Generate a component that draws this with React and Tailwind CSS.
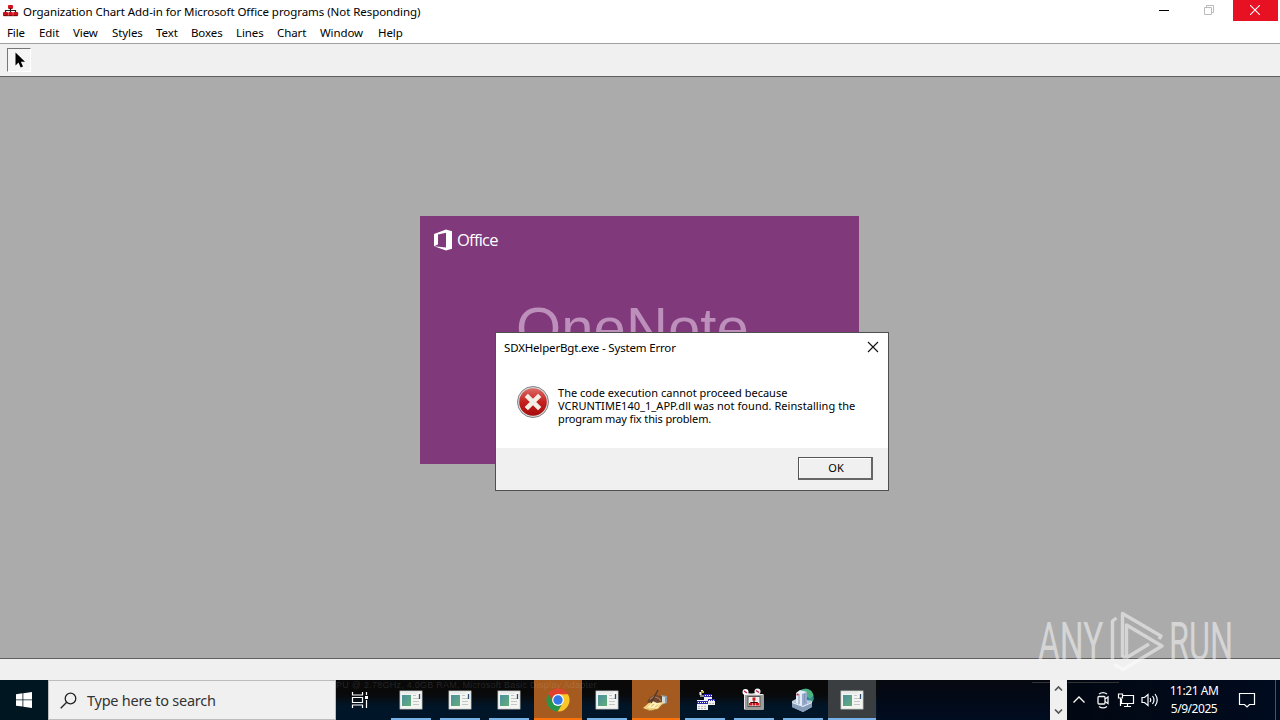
import clsx from "clsx";

const menus = [
  { label: "File", cls: "w-8" },
  { label: "Edit", cls: "w-[34px]" },
  { label: "View", cls: "w-[39px]" },
  { label: "Styles", cls: "w-11" },
  { label: "Text", cls: "w-[35px]" },
  { label: "Boxes", cls: "w-[45px]" },
  { label: "Lines", cls: "w-[41px]" },
  { label: "Chart", cls: "w-[43px]" },
  { label: "Window", cls: "w-[58px]" },
  { label: "Help", cls: "w-10" },
];

const tasks = [
  { id: 1, icon: "window" },
  { id: 2, icon: "window" },
  { id: 3, icon: "window" },
  { id: 4, icon: "chrome", state: "alert" },
  { id: 5, icon: "window" },
  { id: 6, icon: "note", state: "alert" },
  { id: 7, icon: "batch" },
  { id: 8, icon: "orgchart" },
  { id: 9, icon: "server" },
  { id: 10, icon: "window", state: "active" },
];

function OrgIcon() {
  return (
    <svg width="16" height="14" viewBox="0 0 16 14">
      <path d="M7.500 4v4M2.500 9V6.500h10V9" stroke="#222" strokeWidth="1.200" fill="none" />
      <rect x="5" y="1" width="5" height="3.600" rx="1" fill="#d8101c" />
      <rect x="0" y="8" width="5" height="4" rx="1" fill="#c8101c" />
      <rect x="5.300" y="8" width="4.600" height="4" rx="1" fill="#d8101c" />
      <rect x="10.200" y="8" width="5" height="4" rx="1" fill="#c8101c" />
      <path d="M5.500 4.500h4M.5 11.700h14" stroke="#600" strokeWidth=".8" />
    </svg>
  );
}

function WindowIcon() {
  return (
    <svg width="24" height="24" viewBox="0 0 24 24">
      <rect x="1" y="3" width="22" height="18" fill="#f4f4f1" stroke="#c9cfce" strokeWidth=".8" />
      <defs>
        <linearGradient id="winpane" x1="0" y1="0" x2="1" y2="1">
          <stop offset="0" stopColor="#4b8fa0" />
          <stop offset="1" stopColor="#62ad78" />
        </linearGradient>
      </defs>
      <rect x="3" y="7" width="9" height="11" fill="url(#winpane)" />
      <path d="M14 7.500h3M14 10.500h6M14 13.500h6M14 16.500h6" stroke="#c3c6c8" />
      <path d="M20.500 6v5" stroke="#27507a" strokeWidth="1.300" />
      <path d="M3 5h15" stroke="#dfe4e6" />
    </svg>
  );
}

function ChromeIcon() {
  return (
    <svg width="24" height="24" viewBox="0 0 24 24">
      <path d="M12 12L2 6.300A11.500 11.500 0 0 1 22 6.300z" fill="#e2402f" />
      <path d="M12 6.300h10A11.500 11.500 0 0 1 11.500 23.500L17 14.800z" fill="#fbc727" />
      <path d="M2 6.300L7 14.800l5 2.900 4.600-2.400-5.100 8.200A11.500 11.500 0 0 1 2 6.300z" fill="#27964b" />
      <circle cx="12" cy="12" r="5.900" fill="#fff" />
      <circle cx="12" cy="12" r="4.700" fill="#3478e5" />
    </svg>
  );
}

function NoteIcon() {
  return (
    <svg width="26" height="24" viewBox="0 0 26 24">
      <path d="M18 7l6 1v7l-6 2z" fill="#8f9ca3" />
      <path d="M18 8l4 1v6l-4 1z" fill="#d3dbdb" />
      <path d="M0 20L8 13l13 1-6 7-8 2z" fill="#f2cf7c" />
      <path d="M4 19.500L10 14l8 1-4 5.500z" fill="#fff0ba" />
      <path d="M8 18.500l3-2.500M12 19.500l3-3" stroke="#d8b050" />
      <path d="M4 14L7 9l5-2 7 1v6l-5 1-4-2-4 2z" fill="#6e452e" />
      <path d="M7 11l4-2.500 5 2 2 2.500" stroke="#b07a50" strokeWidth="1.200" fill="none" />
      <path d="M8 15L15 2" stroke="#4e3a2e" strokeWidth="1.500" />
      <path d="M2 21.500l6 1 8-1.500" stroke="#9c6a2c" fill="none" strokeWidth=".7" />
    </svg>
  );
}

function BatchIcon() {
  return (
    <svg width="24" height="24" viewBox="0 0 24 24" shapeRendering="crispEdges">
      <path d="M6 4h2V2h2v2H9v3h2v2H7V7H6z" fill="#8b8b8b" />
      <path d="M8 2h2v1H8zM7 4h1v3H7z" fill="#eee" />
      <path d="M9 3h2v2H9z" fill="#c9b83a" />
      <path d="M11 6h8v8h-8zM15 11h7v6h-7z" fill="#f1f1f1" />
      <path d="M11 6h8v3h-8zM15 11h7v2h-7z" fill="#2b27b0" />
      <path d="M4 12h11v10H4z" fill="#f1f1f1" />
      <path d="M4 13h11v3H4z" fill="#2b27b0" />
      <path d="M5 14.500h9M12 7.500h7M16 12.500h6" stroke="#fff" strokeDasharray="1 1" />
      <path d="M5 18.500h9M5 20.500h9M16 15.500h5" stroke="#bdbdbd" strokeDasharray="2 1" />
    </svg>
  );
}

function OrgChartIcon() {
  return (
    <svg width="24" height="24" viewBox="0 0 24 24">
      <rect x="2" y="6" width="20" height="16" rx="1" fill="#9c9c98" />
      <path d="M2.500 21V6.500H21" stroke="#e8e8e8" fill="none" />
      <rect x="6" y="8.500" width="12" height="10" fill="#f4f0f0" stroke="#555" />
      <path d="M4 4.500q4 3 10 1" stroke="#ddd" strokeWidth="1.500" fill="none" />
      <circle cx="3.500" cy="4" r="3" fill="#fff" />
      <circle cx="15.500" cy="3.500" r="3" fill="#f5f5f5" />
      <path d="M2 3l3 2M14 2.500l3 2" stroke="#b01c58" strokeWidth="1.500" />
      <path d="M12 12v4M8.500 16v-1.500h7V16" stroke="#400" fill="none" />
      <path d="M10.500 9.500h3v3h-3zM7 15h3v2.500H7zM10.500 15h3v2.500h-3zM14 15h3v2.500h-3z" fill="#d3151c" />
    </svg>
  );
}

function ServerIcon() {
  return (
    <svg width="24" height="24" viewBox="0 0 24 24">
      <circle cx="14" cy="9.500" r="8.800" fill="#2b83a3" />
      <path d="M11 1.500c6-2 10 1 11.500 6L19 11l-6-5z" fill="#4db380" />
      <path d="M18 12l5-2-3 6-3 1z" fill="#3fa070" />
      <path d="M1 13l6-3 14 3v6l-9 5L1 19z" fill="#b8c8da" />
      <path d="M1 14l11 4 9-4v5l-9 5-11-5z" fill="#869dba" />
      <path d="M1 14.500l11 4 9-4" stroke="#e8f0f8" fill="none" />
      <path d="M5 5l4-3 7 2v12l-5 2-6-3z" fill="#e4ecf5" />
      <path d="M11 6l5-2v12l-5 2z" fill="#96a9cb" />
      <path d="M8 6v10M13.500 6v9" stroke="#8297bd" />
      <path d="M5.500 6.500h2" stroke="#c23" strokeWidth="1.800" />
    </svg>
  );
}

const icons = {
  window: WindowIcon,
  chrome: ChromeIcon,
  note: NoteIcon,
  batch: BatchIcon,
  orgchart: OrgChartIcon,
  server: ServerIcon,
};

function TaskButton({ icon, state }) {
  const Icon = icons[icon];
  return (
    <div
      className={clsx(
        "relative w-12 mr-px h-10 shrink-0 flex items-center justify-center",
        state === "alert" && "bg-[#a55b20]",
        state === "active" && "bg-[#3b3e41]"
      )}
    >
      <Icon />
      <div
        className={clsx(
          "absolute bottom-0 h-0.5",
          state ? "inset-x-0" : "left-1 w-10",
          state === "alert" ? "bg-[#fc7208]" : "bg-[#76b2e8]"
        )}
      />
    </div>
  );
}

function Splash() {
  return (
    <div className="absolute left-[420px] top-[216px] w-[439px] h-[248px] bg-[#80397b] overflow-hidden">
      <div className="flex items-center pl-3.5 pt-[13px]">
        <svg width="18" height="22" viewBox="0 0 18 22">
          <path fillRule="evenodd" d="M0 5L12 .5l6 1.800v17.400l-6 1.800L0 17.300l12 1.200V3.700L4 5.500v10L0 17.300z" fill="#fff" />
        </svg>
        <span className="ml-[5px] font-['Open_Sans'] text-[16.5px] leading-[22px] tracking-[-0.75px] text-white">Office</span>
      </div>
      <div className="pl-24 mt-[43px] font-['Liberation_Sans'] text-[58px] leading-[67px] tracking-[0.1px] text-[#bd8fbb]">OneNote</div>
    </div>
  );
}

function ErrorDialog() {
  return (
    <div className="absolute left-[495px] top-[332px] w-[394px] h-[159px] flex flex-col bg-white border border-[#4f4f4f] text-black">
      <div className="flex justify-between h-[30px] shrink-0 pl-2 pr-[9px]">
        <span className="text-[11.5px] leading-[30px] tracking-[-0.17px] whitespace-nowrap">SDXHelperBgt.exe - System Error</span>
        <svg className="mt-2" width="12" height="12" viewBox="0 0 12 12">
          <path d="M1 1l10 10M11 1L1 11" stroke="#111" strokeWidth="1.100" />
        </svg>
      </div>
      <div className="flex flex-1 pl-[21px] pt-[23px]">
        <svg width="32" height="32" viewBox="0 0 32 32">
          <defs>
            <linearGradient id="err" x1="0" y1="0" x2="0" y2="1">
              <stop offset="0" stopColor="#dd6b65" />
              <stop offset=".5" stopColor="#c4201f" />
              <stop offset="1" stopColor="#a50d0d" />
            </linearGradient>
          </defs>
          <circle cx="16" cy="16" r="15.500" fill="#d9d9d9" stroke="#777" strokeWidth=".9" />
          <circle cx="16" cy="16" r="13.800" fill="url(#err)" />
          <path d="M9.300 9.300l13.400 13.400M22.700 9.300L9.300 22.700" stroke="#f4efe6" strokeWidth="4.600" />
        </svg>
        <div className="ml-[9px] text-[11px] leading-[13px] whitespace-nowrap">
          <p className="tracking-[0.01px]">The code execution cannot proceed because</p>
          <p className="tracking-[0.05px]">VCRUNTIME140_1_APP.dll was not found. Reinstalling the</p>
          <p className="tracking-[-0.13px]">program may fix this problem.</p>
        </div>
      </div>
      <div className="flex justify-end h-[42px] shrink-0 bg-[#f0f0f0] pt-[9px] pr-[15px]">
        <button className="w-[75px] h-[23px] border border-[#555] border-r-2 border-b-2 border-r-[#666] border-b-[#666] shadow-[inset_1px_1px_0_#fff] pl-0.5 text-[11px] leading-5 text-center">OK</button>
      </div>
    </div>
  );
}

function Watermark() {
  return (
    <div className="absolute left-[1038px] top-[608px] w-[200px] h-[66px] opacity-50 text-white">
      <div className="absolute left-0 top-1 origin-left scale-x-[0.62] font-[Roboto] text-[54px] leading-[60px]">ANY</div>
      <svg className="absolute left-[71px] top-0.5" width="56" height="64" viewBox="0 0 56 64" fill="none" stroke="#fff" strokeWidth="3.400" strokeLinejoin="round">
        <path d="M3.500 50V11l4-3" />
        <path d="M13.500 47V3.500L52 26l-2 3" />
        <path d="M13.500 47h4V15L53 36 14 59.500 5 54.500M17 48l23-14" />
      </svg>
      <div className="absolute left-[131px] top-1 origin-left scale-x-[0.6] font-[Roboto] text-[54px] leading-[60px]">RUN</div>
    </div>
  );
}

function Tray() {
  return (
    <div className="flex h-10 w-[213px] shrink-0 items-center bg-gradient-to-r from-[#020812] to-[#000b1f] text-white">
      <svg className="ml-[5px]" width="14" height="14" viewBox="0 0 14 14" fill="none" stroke="#fff" strokeWidth="1.300">
        <path d="M1.500 9.500L7 4l5.500 5.500" />
      </svg>
      <svg className="ml-2.5" width="14" height="18" viewBox="0 0 14 18" fill="none" stroke="#f4f4f4" strokeWidth="1.300">
        <rect x="2" y="5.500" width="7" height="7.500" rx="1" />
        <path d="M9 8l3-2v6.500L9 10.500M3 3q4-2.800 8 0M3 15.500q4 2.800 8 0" />
      </svg>
      <svg className="ml-[7px]" width="18" height="16" viewBox="0 0 18 16" fill="none" stroke="#fff" strokeWidth="1.200">
        <path d="M6 3.500h10.500v8H4.500V7M10.500 11.500v3M7 14.500h7" />
        <path d="M1.500 2h4v4h-4zM3.500 6v8" />
      </svg>
      <svg className="ml-1.5" width="18" height="16" viewBox="0 0 18 16" fill="none" stroke="#fff" strokeWidth="1.200">
        <path d="M1 5.500h2.500L7 2.500v11l-3.500-3H1zM9 6q1.500 2 0 4M11.500 4q3 4 0 8M14 2q4.500 6 0 12" />
      </svg>
      <div className="ml-1.5 w-[58px] text-center text-[12px] leading-[18px] tracking-[-0.45px] whitespace-nowrap">
        <div>11:21 AM</div>
        <div>5/9/2025</div>
      </div>
      <svg className="ml-[15px]" width="18" height="18" viewBox="0 0 18 18" fill="none" stroke="#fff" strokeWidth="1.200">
        <path d="M1.500 2.500h15v11h-5L9 16l-2.500-2.500h-5z" />
      </svg>
      <div className="ml-auto mr-1 h-10 w-px bg-[#4a5260]" />
    </div>
  );
}

function Taskbar() {
  return (
    <div className="relative flex h-10 shrink-0 overflow-hidden bg-gradient-to-b from-[#090909] from-35% to-[#001527] to-65%">
      <div className="flex w-12 shrink-0 items-center justify-center bg-[#001722]">
        <svg width="16" height="16" viewBox="0 0 16 16" fill="#fff">
          <path d="M0 2.200l6.500-.9v6.200H0zM7.300 1.200L16 0v7.500H7.300zM0 8.300h6.500v6.200L0 13.700zM7.300 8.300H16V16l-8.700-1.300z" />
        </svg>
      </div>
      <div className="flex w-72 shrink-0 items-center border border-[#bcbcbc] bg-[#f0f0f0] pl-[11px]">
        <svg width="17" height="17" viewBox="0 0 17 17" fill="none" stroke="#222" strokeWidth="1.300">
          <circle cx="10.500" cy="6.500" r="5.300" />
          <path d="M6.700 10.300L.7 16.300" />
        </svg>
        <span className="ml-2.5 mt-0.5 text-[14.5px] tracking-[-0.25px] text-[#333] whitespace-nowrap">Type here to search</span>
      </div>
      <div className="flex w-[51px] shrink-0 items-center pl-[15px]">
        <svg width="18" height="18" viewBox="0 0 18 18" fill="none" stroke="#fff" strokeWidth="1.200">
          <path d="M1.500 1v3h10V1M1.500 6.500h10v5h-10zM1.500 17v-3h10v3M15.500 1v3M15.500 9v8" />
          <path d="M14 5h3v3h-3z" fill="#fff" stroke="none" />
        </svg>
      </div>
      {tasks.map((t) => (
        <TaskButton key={t.id} icon={t.icon} state={t.state} />
      ))}
      <div className="flex-1 bg-gradient-to-b from-[#050810] to-[#000c20]" />
      <div className="flex w-[17px] shrink-0 flex-col items-center justify-between bg-[#f0f0f0] py-[5px]">
        <svg width="9" height="7" viewBox="0 0 9 7" fill="none" stroke="#555" strokeWidth="1.700">
          <path d="M1 5.500L4.500 2 8 5.500" />
        </svg>
        <svg width="9" height="7" viewBox="0 0 9 7" fill="none" stroke="#555" strokeWidth="1.700">
          <path d="M1 1.500L4.500 5 8 1.500" />
        </svg>
      </div>
      <Tray />
      <div className="absolute left-[336px] top-0 font-['Liberation_Sans'] text-[9px] leading-[10px] tracking-[0.25px] text-white/12 whitespace-nowrap">
        PU @ 2.78GHz, 4.0GB RAM, Microsoft Basic Display Adapter
      </div>
      <div className="absolute left-[1032px] top-0.5 h-px w-[18px] bg-[#333]" />
      <div className="absolute left-[1068px] top-0.5 h-px w-[51px] bg-[#333]" />
    </div>
  );
}

export default function App() {
  return (
    <div className="relative flex h-[720px] w-[1280px] flex-col overflow-hidden bg-[#ababab] font-['Noto_Sans','Open_Sans',sans-serif] text-black">
      {/* Title bar */}
      <div className="flex h-[22px] shrink-0 bg-white">
        <div className="ml-[3px] mt-1"><OrgIcon /></div>
        <span className="ml-1 text-[11.5px] leading-[23px] tracking-[-0.06px] whitespace-nowrap">Organization Chart Add-in for Microsoft Office programs (Not Responding)</span>
        <div className="ml-auto flex">
          <svg className="mr-[35px] mt-[5px]" width="10" height="10" viewBox="0 0 10 10">
            <path d="M0 5.500h10" stroke="#000" />
          </svg>
          <svg className="mr-[19px] mt-[5px]" width="10" height="10" viewBox="0 0 10 10" fill="none" stroke="#bbb">
            <path d="M.5 2.500h7v7h-7zM2.500 2V.5h7v7H8" />
          </svg>
          <div className="mr-0.5 flex h-[21px] w-[45px] items-center justify-center bg-[#e81123] pr-0.5 pb-px">
            <svg width="10" height="10" viewBox="0 0 10 10">
              <path d="M0 0l10 10M10 0L0 10" stroke="#fff" strokeWidth="1.100" />
            </svg>
          </div>
        </div>
      </div>

      {/* Menu */}
      <div className="flex h-[21px] shrink-0 bg-white pl-[7px]">
        {menus.map((m) => (
          <div key={m.label} className={clsx("shrink-0 text-[11.5px] leading-[21px] tracking-[-0.1px]", m.cls)}>{m.label}</div>
        ))}
      </div>

      {/* Toolbar */}
      <div className="h-[34px] shrink-0 border-t border-b border-t-[#a0a0a0] border-b-[#606060] bg-[#f0f0f0] pl-[7px] pt-1">
        <div className="flex h-6 w-6 items-start justify-center border border-t-[#777] border-l-[#777] border-r-white border-b-white bg-[#f5f5f5] pl-0.5 pt-[3px]">
          <svg width="10" height="16" viewBox="0 0 10 16">
            <path d="M.5.5v13l3-3 2.200 5 2.300-1-2.200-4.700H10z" fill="#000" />
          </svg>
        </div>
      </div>

      <div className="flex-1" />

      {/* Status bar */}
      <div className="h-[22px] shrink-0 border-t border-[#606060] bg-[#f0f0f0]" />
      <Taskbar />

      <Splash />
      <ErrorDialog />
      <Watermark />
    </div>
  );
}
